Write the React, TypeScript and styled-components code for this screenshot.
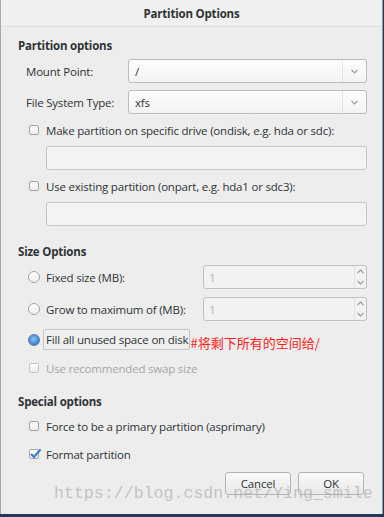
import React from "react";
import styled, { createGlobalStyle } from "styled-components";

const GlobalStyle = createGlobalStyle`
  html, body {
    margin: 0;
    padding: 0;
    background: #1d3a5c;
  }
  * {
    box-sizing: border-box;
  }
`;

const TEXT = "#2e3436";
const FONT = `"Open Sans", "Noto Sans", sans-serif`;

const Screen = styled.div`
  width: 384px;
  height: 517px;
  display: flex;
  flex-direction: column;
  background: #1d3a5c;
  font-family: ${FONT};
  color: ${TEXT};
  letter-spacing: -0.2px;
`;

const Dialog = styled.div`
  position: relative;
  height: 514px;
  width: 383px;
  display: flex;
  flex-direction: column;
  background: #ededed;
  border-left: 1px solid #a8a8a8;
  border-right: 1px solid #9a9a9a;
  overflow: hidden;
`;

const TitleBar = styled.div`
  height: 27px;
  display: flex;
  align-items: center;
  justify-content: center;
  background: #f0f0f0;
  border-bottom: 1px solid #dedede;
  font-weight: 700;
  font-size: 11.5px;
`;

const Body = styled.div`
  display: flex;
  flex-direction: column;
  padding: 0 15px 0 17px;
`;

const SectionHeader = styled.div<{ $gap: number }>`
  height: 18px;
  margin-top: ${(p) => p.$gap}px;
  display: flex;
  align-items: center;
  font-weight: 700;
  font-size: 11.5px;
`;

const FieldRow = styled.div<{ $gap: number }>`
  height: 24px;
  margin-top: ${(p) => p.$gap}px;
  display: flex;
  align-items: center;
`;

const FieldLabel = styled.div`
  width: 110px;
  padding-left: 8px;
  font-size: 11.5px;
`;

const Combo = styled.div`
  flex: 1;
  height: 24px;
  display: flex;
  align-items: stretch;
  border: 1px solid #bcbcbc;
  border-radius: 3px;
  background: linear-gradient(#fdfdfd, #f3f3f3);
  font-size: 11.5px;
`;

const ComboText = styled.div`
  flex: 1;
  display: flex;
  align-items: center;
  padding-left: 6px;
`;

const ComboArrow = styled.div`
  width: 24px;
  display: flex;
  align-items: center;
  justify-content: center;
  border-left: 1px solid #e2e2e2;
`;

const OptionRow = styled.div<{ $gap: number; $disabled?: boolean }>`
  height: 18px;
  margin-top: ${(p) => p.$gap}px;
  display: flex;
  align-items: center;
  padding-left: 11px;
  gap: 7px;
  font-size: 11.5px;
  color: ${(p) => (p.$disabled ? "#a6a6a6" : TEXT)};
`;

const CheckBox = styled.div<{ $disabled?: boolean }>`
  width: 10px;
  height: 10px;
  flex: none;
  position: relative;
  border: 1px solid ${(p) => (p.$disabled ? "#c6c6c6" : "#a4a4a4")};
  border-radius: 2px;
  background: linear-gradient(#ffffff, #ececec);
`;

const CheckMark = styled.svg`
  position: absolute;
  left: -1px;
  top: -3px;
`;

const Entry = styled.div<{ $gap: number }>`
  height: 24px;
  margin-top: ${(p) => p.$gap}px;
  margin-left: 28px;
  border: 1px solid #c6c6c6;
  border-radius: 3px;
  background: #f3f3f3;
`;

const RadioRow = styled.div<{ $gap: number; $height: number }>`
  height: ${(p) => p.$height}px;
  margin-top: ${(p) => p.$gap}px;
  display: flex;
  align-items: center;
  padding-left: 10px;
  font-size: 11.5px;
`;

const Radio = styled.div<{ $on?: boolean }>`
  width: 12px;
  height: 12px;
  flex: none;
  margin-right: 6px;
  border-radius: 50%;
  border: 1px solid ${(p) => (p.$on ? "#4a7fb8" : "#a4a4a4")};
  background: ${(p) =>
    p.$on
      ? "radial-gradient(circle at 45% 40%, #8cc0f0 0, #4a8ad2 60%, #3b73b5 100%)"
      : "linear-gradient(#ffffff, #ececec)"};
`;

const RadioLabel = styled.div`
  width: 157px;
`;

const Spin = styled.div`
  flex: 1;
  height: 24px;
  display: flex;
  align-items: stretch;
  border: 1px solid #c2c2c2;
  border-radius: 3px;
  background: #f2f2f2;
  color: #b4b4b4;
  font-size: 11.5px;
`;

const SpinValue = styled.div`
  flex: 1;
  display: flex;
  align-items: center;
  padding-left: 5px;
`;

const SpinArrows = styled.div`
  width: 12px;
  display: flex;
  flex-direction: column;
  justify-content: space-around;
  align-items: center;
  border-left: 1px solid #e0e0e0;
`;

const FocusBox = styled.div`
  height: 21px;
  display: flex;
  align-items: center;
  margin-left: -3px;
  padding: 0 1px 0 2px;
  border: 1px solid #c4c4c4;
  border-radius: 2px;
  background: #efefef;
`;

const Note = styled.span`
  color: #ff1a1a;
  font-size: 13px;
  margin-top: 6px;
  letter-spacing: 0;
  font-family: "Noto Sans CJK SC", "Noto Sans", sans-serif;
`;

const ButtonBar = styled.div`
  margin-top: 9px;
  display: flex;
  justify-content: flex-end;
  gap: 7px;
  padding-right: 3px;
`;

const Button = styled.div`
  width: 66px;
  height: 23px;
  display: flex;
  align-items: center;
  justify-content: center;
  border: 1px solid #b4b4b4;
  border-radius: 3px;
  background: linear-gradient(#fafafa, #e8e8e8);
  font-size: 11.5px;
`;

const Watermark = styled.div`
  position: absolute;
  left: 53px;
  top: 484px;
  font-family: "Liberation Mono", "Courier New", monospace;
  font-size: 16.6px;
  letter-spacing: 0;
  color: rgba(165, 165, 165, 0.6);
  pointer-events: none;
  white-space: nowrap;
`;

const Chevron = ({ up }: { up?: boolean }) => (
  <svg width="7" height="5" viewBox="0 0 7 5">
    <path
      d={up ? "M0.5 4 L3.5 1 L6.5 4" : "M0.5 1 L3.5 4 L6.5 1"}
      fill="none"
      stroke="#9a9a9a"
      strokeWidth="1.1"
    />
  </svg>
);

const Check = ({ checked, disabled }: { checked?: boolean; disabled?: boolean }) => (
  <CheckBox $disabled={disabled}>
    {checked && (
      <CheckMark width="13" height="13" viewBox="0 0 13 13">
        <path d="M2 7 L5 10 L11.5 2.5" fill="none" stroke="#3d7cc9" strokeWidth="2.2" />
      </CheckMark>
    )}
  </CheckBox>
);

export default function App() {
  return (
    <Screen>
      <GlobalStyle />
      <Dialog>
        <TitleBar>Partition Options</TitleBar>
        <Body>
          <SectionHeader $gap={9}>Partition options</SectionHeader>
          <FieldRow $gap={5}>
            <FieldLabel>Mount Point:</FieldLabel>
            <Combo>
              <ComboText>/</ComboText>
              <ComboArrow>
                <Chevron />
              </ComboArrow>
            </Combo>
          </FieldRow>
          <FieldRow $gap={7}>
            <FieldLabel>File System Type:</FieldLabel>
            <Combo>
              <ComboText>xfs</ComboText>
              <ComboArrow>
                <Chevron />
              </ComboArrow>
            </Combo>
          </FieldRow>
          <OptionRow $gap={7}>
            <Check />
            Make partition on specific drive (ondisk, e.g. hda or sdc):
          </OptionRow>
          <Entry $gap={7} />
          <OptionRow $gap={7}>
            <Check />
            Use existing partition (onpart, e.g. hda1 or sdc3):
          </OptionRow>
          <Entry $gap={7} />

          <SectionHeader $gap={16}>Size Options</SectionHeader>
          <RadioRow $gap={5} $height={24}>
            <Radio />
            <RadioLabel>Fixed size (MB):</RadioLabel>
            <Spin>
              <SpinValue>1</SpinValue>
              <SpinArrows>
                <Chevron up />
                <Chevron />
              </SpinArrows>
            </Spin>
          </RadioRow>
          <RadioRow $gap={8} $height={24}>
            <Radio />
            <RadioLabel>Grow to maximum of (MB):</RadioLabel>
            <Spin>
              <SpinValue>1</SpinValue>
              <SpinArrows>
                <Chevron up />
                <Chevron />
              </SpinArrows>
            </Spin>
          </RadioRow>
          <RadioRow $gap={8} $height={21}>
            <Radio $on />
            <FocusBox>Fill all unused space on disk</FocusBox>
            <Note>#将剩下所有的空间给/</Note>
          </RadioRow>
          <OptionRow $gap={9} $disabled>
            <Check disabled />
            Use recommended swap size
          </OptionRow>

          <SectionHeader $gap={15}>Special options</SectionHeader>
          <OptionRow $gap={7}>
            <Check />
            Force to be a primary partition (asprimary)
          </OptionRow>
          <OptionRow $gap={10}>
            <Check checked />
            Format partition
          </OptionRow>
          <ButtonBar>
            <Button>Cancel</Button>
            <Button>OK</Button>
          </ButtonBar>
        </Body>
        <Watermark>https://blog.csdn.net/Ying_smile</Watermark>
      </Dialog>
    </Screen>
  );
}
